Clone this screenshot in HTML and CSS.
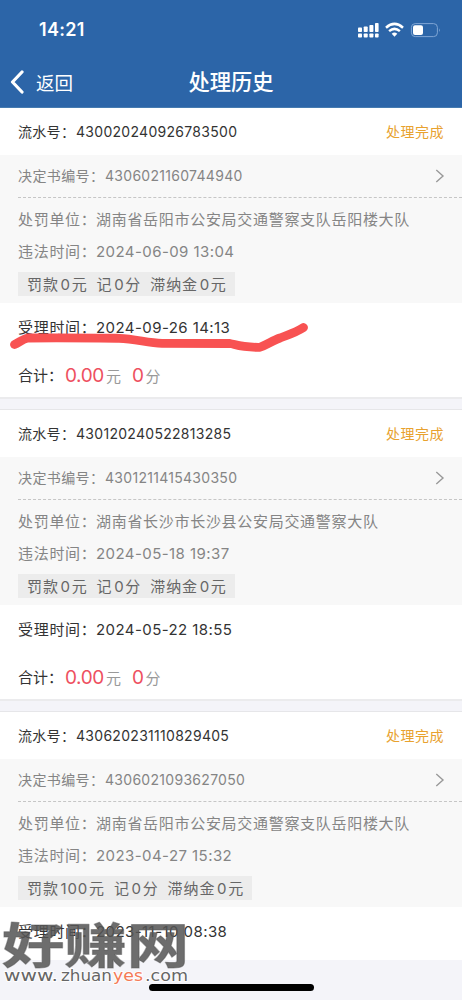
FILE: index.html
```
<!DOCTYPE html>
<html lang="zh-CN">
<head>
<meta charset="utf-8">
<title>处理历史</title>
<link rel="stylesheet" href="styles.css">
</head>
<body>
<div class="screen">
  <header class="header">
    <div class="status">
      <span class="clock">14:21</span>
      <svg class="status-icons" width="84" height="18" viewBox="0 0 84 18">
        <g fill="#fff">
          <rect x="0" y="6.5" width="4" height="4.5" rx=".8"/><rect x="5.7" y="5.5" width="4" height="5.5" rx=".8"/><rect x="11.4" y="4" width="4" height="7" rx=".8"/><rect x="17" y="2" width="3.6" height="9" rx=".8"/>
          <rect x="0" y="12.5" width="4" height="4" rx=".8"/><rect x="5.7" y="12.5" width="4" height="4" rx=".8"/><rect x="11.4" y="12.5" width="4" height="4" rx=".8"/><rect x="17" y="12.5" width="3.6" height="4" rx=".8"/>
          <path d="M36.5 15.7 33.7 12.7Q36.5 10.4 39.3 12.7Z"/>
        </g>
        <path d="M28 6.7Q36.5-.9 45 6.7M31.1 10.1Q36.5 5.6 41.9 10.1" fill="none" stroke="#fff" stroke-width="2.5"/>
        <rect x="53.4" y="2.6" width="26" height="13" rx="3.8" fill="none" stroke="#7fa5d4"/>
        <rect x="55" y="4.2" width="10" height="9.8" rx="2" fill="#fff"/>
        <path d="M81 7.2q1.7 1.9 0 3.8Z" fill="#7fa5d4"/>
      </svg>
    </div>
    <nav class="nav">
      <span class="back"><svg width="14" height="24" viewBox="0 0 14 24"><path d="M12 2 2.5 12 12 22" fill="none" stroke="#fff" stroke-width="3.2" stroke-linecap="round" stroke-linejoin="round"/></svg>返回</span>
      <h1 class="title">处理历史</h1>
    </nav>
  </header>
  <main>
    <section class="card">
      <div class="row head"><span class="label">流水号：</span><span class="num">430020240926783500</span><span class="done">处理完成</span></div>
      <div class="detail">
        <div class="row doc"><span class="doc-label">决定书编号：</span><span class="num">4306021160744940</span><svg class="arrow" width="10" height="14" viewBox="0 0 10 14"><path d="M1.3 1 8 7 1.3 13" fill="none" stroke="#999" stroke-width="1.4"/></svg></div>
        <div class="row unit"><span class="key">处罚单位：</span><span>湖南省岳阳市公安局交通警察支队岳阳楼大队</span></div>
        <div class="row time"><span class="key">违法时间：</span><span class="date">2024-06-09 13:04</span></div>
        <div class="tag"><span>罚款<em>0</em>元</span><span>记<em>0</em>分</span><span>滞纳金<em>0</em>元</span></div>
      </div>
      <div class="row accept"><span class="key">受理时间：</span><span class="date">2024-09-26 14:13</span></div>
      <div class="row total"><span class="sum">合计：</span><b>0.00</b><i>元</i><b class="points">0</b><i>分</i></div>
      <svg class="mark" width="308" height="36" viewBox="0 0 308 36"><path d="M8.5 21.5 C13 19.5 17 16 22 15 C54 14.5 90 15 113 15.3 C130 16 142 20 156 20.3 L224 20.5 C230 21.5 234 24.5 254 24.3 C262 21 267 17.5 274 15 C281 12 288 10.5 297.5 4.5" fill="none" stroke="#f85252" stroke-width="8.8" stroke-linecap="round" stroke-linejoin="round"/></svg>
    </section>
    <section class="card">
      <div class="row head"><span class="label">流水号：</span><span class="num">430120240522813285</span><span class="done">处理完成</span></div>
      <div class="detail">
        <div class="row doc"><span class="doc-label">决定书编号：</span><span class="num">4301211415430350</span><svg class="arrow" width="10" height="14" viewBox="0 0 10 14"><path d="M1.3 1 8 7 1.3 13" fill="none" stroke="#999" stroke-width="1.4"/></svg></div>
        <div class="row unit"><span class="key">处罚单位：</span><span>湖南省长沙市长沙县公安局交通警察大队</span></div>
        <div class="row time"><span class="key">违法时间：</span><span class="date">2024-05-18 19:37</span></div>
        <div class="tag"><span>罚款<em>0</em>元</span><span>记<em>0</em>分</span><span>滞纳金<em>0</em>元</span></div>
      </div>
      <div class="row accept"><span class="key">受理时间：</span><span class="date">2024-05-22 18:55</span></div>
      <div class="row total"><span class="sum">合计：</span><b>0.00</b><i>元</i><b class="points">0</b><i>分</i></div>
    </section>
    <section class="card last">
      <div class="row head"><span class="label">流水号：</span><span class="num">430620231110829405</span><span class="done">处理完成</span></div>
      <div class="detail">
        <div class="row doc"><span class="doc-label">决定书编号：</span><span class="num">4306021093627050</span><svg class="arrow" width="10" height="14" viewBox="0 0 10 14"><path d="M1.3 1 8 7 1.3 13" fill="none" stroke="#999" stroke-width="1.4"/></svg></div>
        <div class="row unit"><span class="key">处罚单位：</span><span>湖南省岳阳市公安局交通警察支队岳阳楼大队</span></div>
        <div class="row time"><span class="key">违法时间：</span><span class="date">2023-04-27 15:32</span></div>
        <div class="tag"><span>罚款<em>100</em>元</span><span>记<em>0</em>分</span><span>滞纳金<em>0</em>元</span></div>
      </div>
      <div class="row accept"><span class="key">受理时间：</span><span class="date">2023-11-10 08:38</span></div>
    </section>
  </main>
  <div class="home-bar"></div>
  <svg class="watermark" width="200" height="70" viewBox="0 0 200 70">
    <text class="wm-name" x="2" y="48" textLength="187" lengthAdjust="spacingAndGlyphs">好赚网</text>
    <g class="wm-url">
      <text x="4" y="66" textLength="54" lengthAdjust="spacingAndGlyphs">www.</text>
      <text x="61" y="66" textLength="51" lengthAdjust="spacingAndGlyphs">zhuan</text>
      <text class="wm-hot" x="113" y="66" textLength="30" lengthAdjust="spacingAndGlyphs">yes</text>
      <text x="145" y="66" textLength="43" lengthAdjust="spacingAndGlyphs">.com</text>
    </g>
  </svg>
</div>
</body>
</html>
```
FILE: styles.css
```
* { box-sizing: border-box; }
body { margin: 0; background: #f4f4f9; font-family: Inter, "Noto Sans CJK SC", sans-serif; }
.screen { position: relative; width: 462px; height: 1000px; overflow: hidden; }
.header { height: 108px; background: #2c65a8; border-bottom: 1px solid #467bb0; color: #fff; }
.status { display: flex; justify-content: space-between; align-items: center; height: 56px; padding: 3px 20px 0 39px; }
.clock { font-size: 18px; font-weight: 600; letter-spacing: .3px; }
.status-icons { display: block; }
.nav { position: relative; display: flex; align-items: center; justify-content: center; height: 51px; }
.back { position: absolute; left: 10px; top: 13px; display: flex; align-items: center; gap: 12px; height: 26px; font-size: 18.5px; }
.title { margin: 0; font-size: 21.3px; font-weight: 500; line-height: 50px; }
.card { position: relative; height: 291px; margin-bottom: 11px; background: #fff; border-bottom: 2px solid #ebebed; font-weight: 370; }
.card + .card { box-shadow: 0 -1px #e6e6e9; }
.card.last { height: 248px; border: 0; margin: 0; }
.row { display: flex; align-items: center; white-space: nowrap; }
.head { height: 47px; padding: 0 18px; color: #333; font-size: 14px; }
.label, .doc-label, .key, .sum, .done { padding-bottom: 2px; }
.label { width: 58px; letter-spacing: .3px; }
.num { letter-spacing: .29px; }
.doc .num { padding-bottom: 1px; }
.done { margin-left: auto; color: #e8a22f; letter-spacing: .5px; }
.detail { height: 148px; padding-left: 18px; background: #f8f8f8; color: #858585; font-size: 15px; letter-spacing: .7px; }
.doc { height: 43px; padding-right: 17px; border-bottom: 1px dashed #c6c6c6; font-size: 14px; }
.doc-label { width: 87px; letter-spacing: .4px; }
.arrow { margin-left: auto; }
.unit { height: 42px; }
.unit span + span { padding-bottom: 2px; }
.time { height: 23px; }
.key { width: 78px; letter-spacing: .7px; }
.date { font-size: 15px; letter-spacing: .43px; }
.tag { display: inline-flex; align-items: center; gap: 9px; height: 24px; margin-top: 9px; padding: 0 8px 2px 9px; background: #ececec; color: #666; letter-spacing: .9px; white-space: nowrap; }
.tag em { margin: 0 .8px 0 1.7px; font-style: normal; }
.accept { height: 48px; padding-left: 18px; color: #333; font-size: 15px; }
.total { height: 48px; padding-left: 18px; color: #333; font-size: 15px; }
.sum { width: 47px; }
.total b { color: #ee5060; font-size: 19px; font-weight: 370; letter-spacing: -.4px; }
.total i { margin-left: 2px; color: #999; font-style: normal; }
.total .points { margin-left: 11px; }
.mark { position: absolute; left: 6px; top: 215px; overflow: visible; }
.home-bar { position: absolute; left: 149px; top: 984px; width: 165px; height: 7px; border-radius: 4px; background: #000; }
.watermark { position: absolute; left: 0; top: 915px; overflow: visible; }
.wm-name { fill: #555; fill-opacity: .86; font-family: "Noto Sans CJK SC", sans-serif; font-size: 48px; font-weight: 700; stroke: #555; stroke-opacity: .5; stroke-width: 1px; stroke-linejoin: round; }
.wm-url { fill: #666; font-family: "DejaVu Sans", sans-serif; font-size: 15px; stroke: #fff; stroke-width: 1.6px; paint-order: stroke; }
.wm-hot { fill: #f47a57; }
```
